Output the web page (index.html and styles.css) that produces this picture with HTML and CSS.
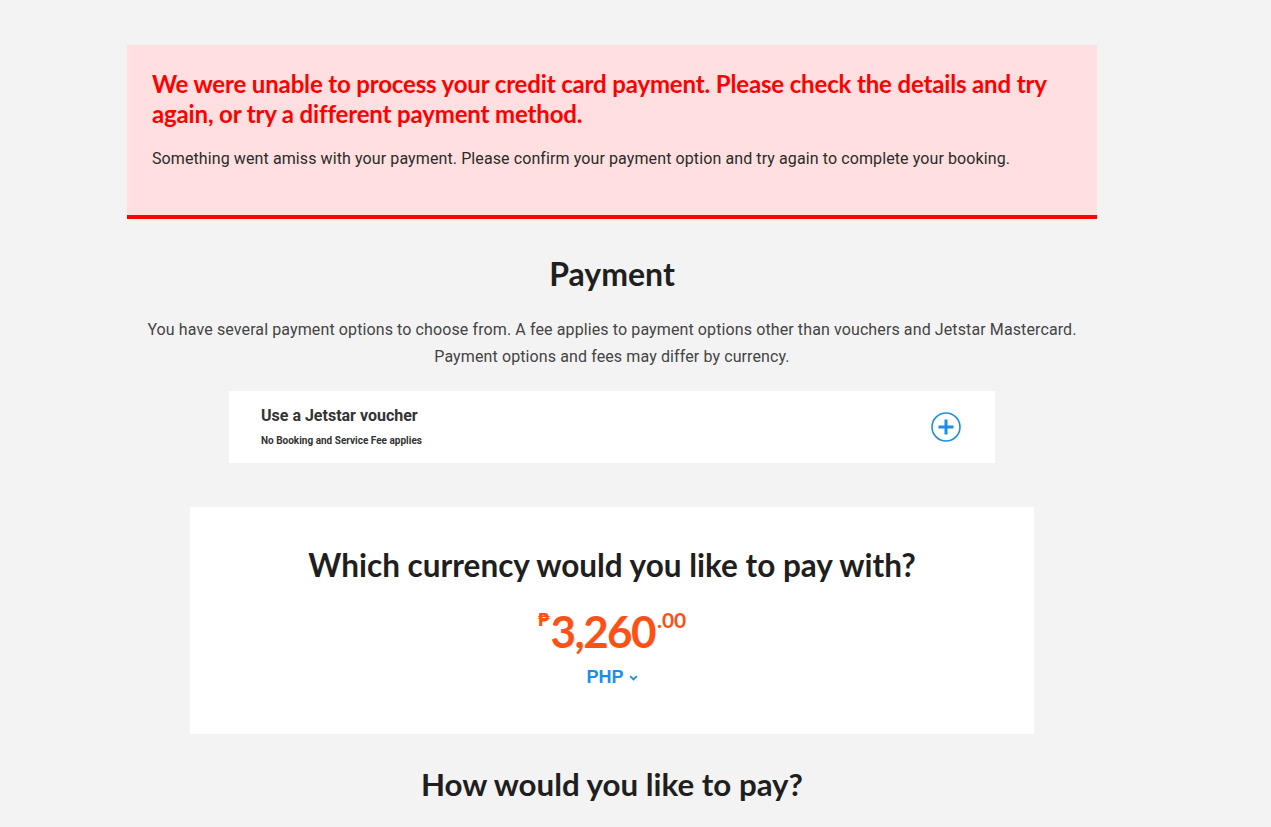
FILE: index.html
```html
<!DOCTYPE html>
<html lang="en">
<head>
<meta charset="utf-8">
<title>Payment</title>
<link rel="stylesheet" href="styles.css">
</head>
<body>
<main class="page">
  <section class="alert">
    <h1 class="alert-title">We were unable to process your credit card payment. Please check the details and try again, or try a different payment method.</h1>
    <p class="alert-text">Something went amiss with your payment. Please confirm your payment option and try again to complete your booking.</p>
  </section>

  <h2 class="section-title">Payment</h2>
  <p class="intro">You have several payment options to choose from. A fee applies to payment options other than vouchers and Jetstar Mastercard.<br>Payment options and fees may differ by currency.</p>

  <div class="voucher">
    <div class="voucher-text">
      <div class="voucher-title">Use a Jetstar voucher</div>
      <div class="voucher-sub">No Booking and Service Fee applies</div>
    </div>
    <svg class="plus" width="32" height="32" viewBox="0 0 32 32" aria-hidden="true">
      <circle cx="16" cy="16" r="14" fill="none" stroke="#1b8fe6" stroke-width="1.6"/>
      <path d="M16 8.5v15M8.5 16h15" stroke="#1b8fe6" stroke-width="3" fill="none"/>
    </svg>
  </div>

  <section class="currency">
    <h2 class="currency-title">Which currency would you like to pay with?</h2>
    <div class="price"><span class="price-sym">₱</span><span class="price-main">3,260</span><span class="price-cents">.00</span></div>
    <button class="currency-select">PHP <svg width="9" height="6" viewBox="0 0 9 6" aria-hidden="true"><path d="M1.2 1.2l3.3 3.2 3.3-3.2" fill="none" stroke="#1a8fe8" stroke-width="1.8"/></svg></button>
  </section>

  <h2 class="section-title pay-title">How would you like to pay?</h2>
</main>
</body>
</html>
```

FILE: styles.css
```css
html, body {
  margin: 0;
  padding: 0;
  background: #f3f3f3;
}

body {
  font-family: Roboto, "Liberation Sans", sans-serif;
  color: #333;
  overflow: hidden;
  height: 827px;
}

.page {
  width: 970px;
  padding: 45px 0 0 127px;
  display: flex;
  flex-direction: column;
  align-items: center;
}

.alert {
  align-self: stretch;
  background: #ffdfdf;
  border-bottom: 4px solid #ff0000;
  padding: 24px 24px 44px 25px;
}

.alert-title {
  margin: 0;
  font-family: Lato, "Noto Sans", sans-serif;
  font-weight: 700;
  font-size: 24px;
  letter-spacing: -0.15px;
  line-height: 30px;
  color: #ff0000;
}

.alert-text {
  margin: 18px 0 0;
  font-size: 16px;
  letter-spacing: 0.1px;
  line-height: 24px;
  color: #2b2b2b;
}

.section-title {
  margin: 37px 0 0;
  font-family: Lato, "Noto Sans", sans-serif;
  font-weight: 700;
  font-size: 32px;
  line-height: 36px;
  color: #1f1f1f;
  text-align: center;
}

.intro {
  margin: 24px 0 0;
  font-size: 16px;
  letter-spacing: 0.11px;
  line-height: 27px;
  color: #444;
  text-align: center;
}

.voucher {
  margin-top: 21px;
  width: 766px;
  height: 72px;
  box-sizing: border-box;
  background: #fff;
  padding: 0 32px;
  display: flex;
  align-items: center;
  justify-content: space-between;
}

.voucher-text {
  margin-top: -1px;
}

.voucher-title {
  font-size: 16px;
  font-weight: 700;
  line-height: 20px;
  color: #333;
}

.voucher-sub {
  margin-top: 9px;
  font-size: 10px;
  font-weight: 700;
  line-height: 12px;
  color: #333;
}

.plus {
  display: block;
  margin-right: 1px;
}

.currency {
  margin-top: 44px;
  width: 844px;
  height: 227px;
  box-sizing: border-box;
  background: #fff;
  padding-top: 38px;
  display: flex;
  flex-direction: column;
  align-items: center;
}

.currency-title {
  margin: 0;
  font-family: Lato, "Noto Sans", sans-serif;
  font-weight: 700;
  font-size: 31.5px;
  line-height: 40px;
  color: #1f1f1f;
}

.price {
  margin-top: 24px;
  display: flex;
  align-items: flex-start;
  color: #ff5115;
  font-family: Lato, "Noto Sans", sans-serif;
  font-weight: 700;
  line-height: 1;
}

.price-sym {
  font-family: "DejaVu Sans", sans-serif;
  font-size: 17px;
  margin-top: 3px;
  margin-right: 1px;
}

.price-main {
  font-size: 44px;
  letter-spacing: -1.6px;
}

.price-cents {
  font-size: 21px;
  margin-top: 0;
  margin-left: 2px;
}

.currency-select {
  margin-top: 14px;
  border: 0;
  background: none;
  padding: 0;
  font-family: "Liberation Sans", Arial, sans-serif;
  font-weight: 700;
  font-size: 18px;
  color: #1a8fe8;
  display: flex;
  align-items: center;
  gap: 5px;
  cursor: pointer;
}

.pay-title {
  margin-top: 32px;
  font-size: 31.3px;
}
```
